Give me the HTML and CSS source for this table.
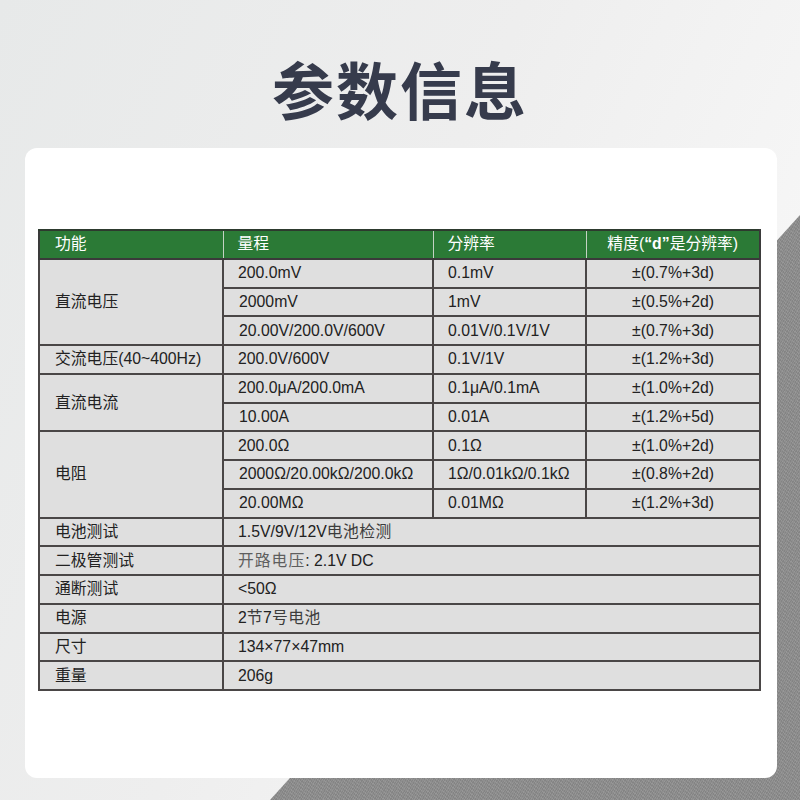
FILE: index.html
```html
<!DOCTYPE html>
<html lang="zh">
<head>
<meta charset="utf-8">
<link rel="stylesheet" href="styles.css">
</head>
<body>
<div class="bg-shape"></div>
<div class="page">
  <h1 class="title">参数信息</h1>
  <div class="card">
    <table class="spec">
      <colgroup>
        <col class="c1"><col class="c2"><col class="c3"><col class="c4">
      </colgroup>
      <thead>
        <tr><th>功能</th><th>量程</th><th>分辨率</th><th class="center">精度(<b>“d”</b>是分辨率)</th></tr>
      </thead>
      <tbody>
        <tr><td rowspan="3">直流电压</td><td>200.0mV</td><td>0.1mV</td><td class="center">±(0.7%+3d)</td></tr>
        <tr><td>2000mV</td><td>1mV</td><td class="center">±(0.5%+2d)</td></tr>
        <tr><td>20.00V/200.0V/600V</td><td>0.01V/0.1V/1V</td><td class="center">±(0.7%+3d)</td></tr>
        <tr><td>交流电压(40~400Hz)</td><td>200.0V/600V</td><td>0.1V/1V</td><td class="center">±(1.2%+3d)</td></tr>
        <tr><td rowspan="2">直流电流</td><td>200.0μA/200.0mA</td><td>0.1μA/0.1mA</td><td class="center">±(1.0%+2d)</td></tr>
        <tr><td>10.00A</td><td>0.01A</td><td class="center">±(1.2%+5d)</td></tr>
        <tr><td rowspan="3">电阻</td><td>200.0Ω</td><td>0.1Ω</td><td class="center">±(1.0%+2d)</td></tr>
        <tr><td>2000Ω/20.00kΩ/200.0kΩ</td><td>1Ω/0.01kΩ/0.1kΩ</td><td class="center">±(0.8%+2d)</td></tr>
        <tr><td>20.00MΩ</td><td>0.01MΩ</td><td class="center">±(1.2%+3d)</td></tr>
        <tr><td>电池测试</td><td colspan="3">1.5V/9V/12V<span class="soft">电池检测</span></td></tr>
        <tr><td>二极管测试</td><td colspan="3"><span class="muted">开路电压</span>: 2.1V DC</td></tr>
        <tr><td>通断测试</td><td colspan="3">&lt;50Ω</td></tr>
        <tr><td>电源</td><td colspan="3">2<span class="soft">节</span>7<span class="soft">号电池</span></td></tr>
        <tr><td>尺寸</td><td colspan="3">134×77×47mm</td></tr>
        <tr><td>重量</td><td colspan="3">206g</td></tr>
      </tbody>
    </table>
  </div>
</div>
</body>
</html>
```

FILE: styles.css
```css
html, body {
  margin: 0;
  padding: 0;
}
body {
  width: 800px;
  height: 800px;
  overflow: hidden;
  position: relative;
  background: linear-gradient(115deg, #e7e9e9 0%, #eeeeee 45%, #fbfbfb 100%);
  font-family: "Liberation Sans", Arial, "Noto Sans CJK SC", sans-serif;
}
.bg-shape {
  position: absolute;
  inset: 0;
  background-color: #8f8f8f;
  background-image:
    repeating-linear-gradient(37deg, rgba(255,255,255,0.08) 0 1px, transparent 1px 3px),
    repeating-linear-gradient(-61deg, rgba(0,0,0,0.08) 0 1px, transparent 1px 2px);
  clip-path: polygon(100% 215px, 100% 100%, 270px 100%);
}
.page {
  position: relative;
  display: flex;
  flex-direction: column;
  align-items: flex-start;
}
.title {
  margin: 0;
  align-self: stretch;
  height: 148px;
  box-sizing: border-box;
  padding-top: 48px;
  text-align: center;
  font-family: "Noto Sans CJK SC", sans-serif;
  font-weight: 700;
  font-size: 62px;
  line-height: 80px;
  letter-spacing: 2px;
  color: #363b4c;
}
.card {
  margin-left: 25px;
  width: 752px;
  height: 630px;
  box-sizing: border-box;
  background: #ffffff;
  border-radius: 12px;
  padding: 81px 18px 0 13px;
}
.spec {
  width: 721px;
  border-collapse: collapse;
  table-layout: fixed;
  font-size: 15.8px;
  color: #222222;
}
.c1 { width: 184px; }
.c2 { width: 210px; }
.c3 { width: 153px; }
.c4 { width: 174px; }
.spec th, .spec td {
  height: 26.75px;
  padding: 0 0 0 14px;
  text-align: left;
  vertical-align: middle;
  white-space: nowrap;
  line-height: 18px;
}
.spec th {
  background: #2b7a36;
  color: #ffffff;
  font-weight: 400;
  border-top: 2px solid #2d3a2e;
  border-bottom: 2px solid #3a3a3a;
  border-left: 1px solid #c4d2c4;
  border-right: 1px solid #c4d2c4;
}
.spec th b { font-weight: 700; }
.spec th:first-child { border-left: 2px solid #3a3a3a; }
.spec th:last-child { border-right: 2px solid #3a3a3a; }
.spec td {
  background: #dfdfdf;
  border: 2px solid #4a4646;
}
.spec .center {
  text-align: center;
  padding-left: 0;
}
.spec .muted {
  color: #5e5e5e;
  letter-spacing: 1px;
}
.spec .soft {
  color: #3c3c3c;
  letter-spacing: 0.5px;
}
.spec th:first-child, .spec td:first-child { padding-left: 15px; }
```
